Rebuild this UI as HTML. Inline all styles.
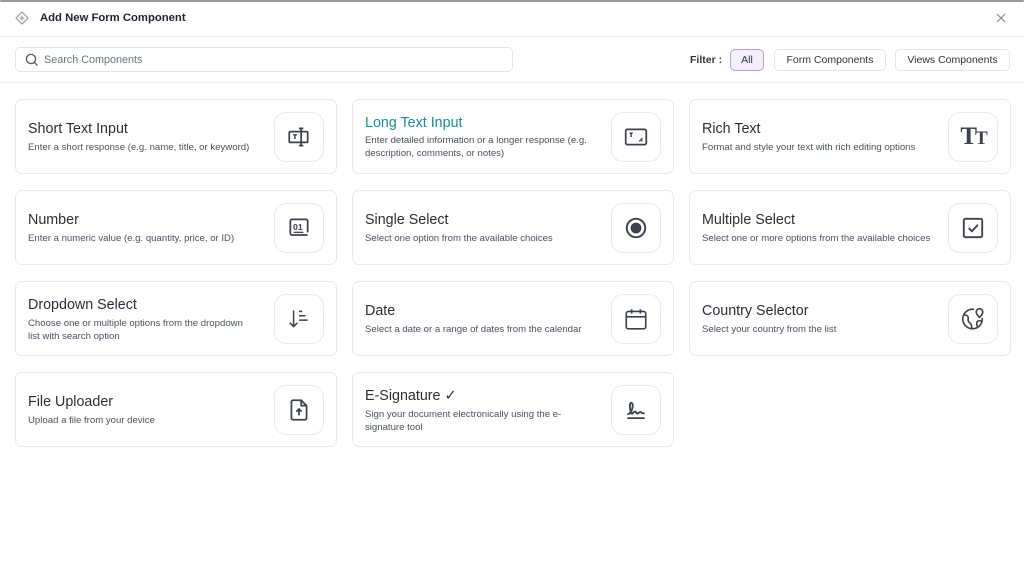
<!DOCTYPE html>
<html><head><meta charset="utf-8"><style>
*{box-sizing:border-box;margin:0;padding:0}
body{width:1024px;height:569px;background:#fff;font-family:"Liberation Sans",sans-serif;position:relative;overflow:hidden;color:#2f3340}
.top{position:absolute;left:0;top:0;width:1024px;height:2px;background:#9a9a9a;border-radius:3px}
.hdr{position:absolute;top:0;left:0;width:1024px;height:37px;border-bottom:1px solid #eeeff2}
.hdr .t{position:absolute;left:40px;top:12px;font-size:11.3px;font-weight:bold;color:#1f2230}
.hdr svg.p{position:absolute;left:15px;top:11px}
.hdr .x{position:absolute;left:995px;top:12px}
.bar{position:absolute;top:37px;left:0;width:1024px;height:46px;border-bottom:1px solid #eeeff2}
.search{position:absolute;left:15px;top:10px;width:498px;height:25px;border:1px solid #e3e5ea;border-radius:5px}
.search span{position:absolute;left:28px;top:6px;font-size:10.8px;color:#6b7280}
.search svg{position:absolute;left:9px;top:5px}
.flt{position:absolute;left:690px;top:17px;font-size:10.5px;font-weight:bold;color:#333}
.btn{position:absolute;top:12px;height:22px;border:1px solid #e3e5ea;border-radius:5px;font-size:10.5px;color:#333;text-align:center;line-height:20px}
.btn.a{border-color:#b89be6;background:#f4efff}
.card{position:absolute;width:322px;height:75px;border:1px solid #e8e9ed;border-radius:7px}
.card h3{position:absolute;left:12px;font-size:14.3px;font-weight:normal;color:#2b2e3a}
.card p{position:absolute;left:12px;width:240px;font-size:9.6px;line-height:12.5px;color:#4b5060}
.ib{position:absolute;left:258px;top:12px;width:50px;height:50px;border:1px solid #e8e9ed;border-radius:12px;display:flex;align-items:center;justify-content:center}
</style></head><body>
<div class="top"></div>
<div class="hdr">
<svg class="p" width="14" height="14" viewBox="0 0 14 14" fill="none" stroke="#8a8f9a" stroke-width="1"><path d="M7 1L13 7L7 13L1 7Z"/><path d="M7 4.5V9.5M4.5 7H9.5"/></svg>
<div class="t">Add New Form Component</div>
<svg class="x" width="12" height="12" viewBox="0 0 12 12" stroke="#888" stroke-width="1.2"><path d="M2 2L10 10M10 2L2 10"/></svg>
</div>
<div class="bar">
<div class="search"><svg width="14" height="14" viewBox="0 0 14 14" fill="none" stroke="#555b66" stroke-width="1.3"><circle cx="6" cy="6" r="4.6"/><path d="M9.4 9.4L12.6 12.6"/></svg><span>Search Components</span></div>
<div class="flt">Filter :</div>
<div class="btn a" style="left:730px;width:34px">All</div>
<div class="btn" style="left:774px;width:112px">Form Components</div>
<div class="btn" style="left:895px;width:115px">Views Components</div>
</div>

<div class="card" style="left:15px;top:99px"><h3 style="top:21px">Short Text Input</h3><p style="top:42px">Enter a short response (e.g. name, title, or keyword)</p>
<div class="ib"><svg width="26" height="26" viewBox="0 0 24 24" fill="none" stroke="#3d414d" stroke-width="1.6"><rect x="3" y="7" width="17" height="10" rx="1"/><path d="M14 4V20M12 4H16M12 20H16"/><path d="M6.5 10H10M8.2 10V14" stroke-width="1.3"/></svg></div></div>

<div class="card" style="left:352px;top:99px"><h3 style="top:15px;color:#1a8a9a">Long Text Input</h3><p style="top:35px">Enter detailed information or a longer response (e.g. description, comments, or notes)</p>
<div class="ib"><svg width="26" height="26" viewBox="0 0 24 24" fill="none" stroke="#3d414d" stroke-width="1.6"><rect x="2.5" y="5" width="19" height="14" rx="1.5"/><path d="M6 8.5H9M7.5 8.5V12" stroke-width="1.3"/><path d="M15 16L18 13M17 16L18 15" stroke-width="1.2"/></svg></div></div>

<div class="card" style="left:689px;top:99px"><h3 style="top:21px">Rich Text</h3><p style="top:42px">Format and style your text with rich editing options</p>
<div class="ib"><span style="font-family:'Liberation Serif',serif;font-weight:bold;font-size:25px;color:#3d414d;letter-spacing:-2px">T<span style="font-size:19px">T</span></span></div></div>

<div class="card" style="left:15px;top:190px"><h3 style="top:21px">Number</h3><p style="top:42px">Enter a numeric value (e.g. quantity, price, or ID)</p>
<div class="ib"><svg width="26" height="26" viewBox="0 0 24 24" fill="none" stroke="#3d414d" stroke-width="1.6"><path d="M20 16V5.5A1.5 1.5 0 0 0 18.5 4H5.5A1.5 1.5 0 0 0 4 5.5V17A1.5 1.5 0 0 0 5.5 18.5H20"/><text x="6.5" y="14" font-size="8" font-weight="bold" fill="#3d414d" stroke="none" font-family="Liberation Sans">01</text><path d="M7 16H16" stroke-width="1.2"/></svg></div></div>

<div class="card" style="left:352px;top:190px"><h3 style="top:21px">Single Select</h3><p style="top:42px">Select one option from the available choices</p>
<div class="ib"><svg width="26" height="26" viewBox="0 0 24 24"><circle cx="12" cy="12" r="8.5" fill="none" stroke="#3d414d" stroke-width="1.8"/><circle cx="12" cy="12" r="5" fill="#3d414d"/></svg></div></div>

<div class="card" style="left:689px;top:190px"><h3 style="top:21px">Multiple Select</h3><p style="top:42px">Select one or more options from the available choices</p>
<div class="ib"><svg width="26" height="26" viewBox="0 0 24 24" fill="none" stroke="#3d414d" stroke-width="1.7"><rect x="3.5" y="3.5" width="17" height="17" rx="1.5"/><path d="M8 12L11 15L16.5 9"/></svg></div></div>

<div class="card" style="left:15px;top:281px"><h3 style="top:15px">Dropdown Select</h3><p style="top:36px;width:225px">Choose one or multiple options from the dropdown list with search option</p>
<div class="ib"><svg width="26" height="26" viewBox="0 0 24 24" fill="none" stroke="#3d414d" stroke-width="1.4"><path d="M7 4V19M3.5 15.5L7 19L10.5 15.5"/><path d="M12 5H15M12 9H18M12 13H20"/></svg></div></div>

<div class="card" style="left:352px;top:281px"><h3 style="top:21px">Date</h3><p style="top:42px">Select a date or a range of dates from the calendar</p>
<div class="ib"><svg width="26" height="26" viewBox="0 0 24 24" fill="none" stroke="#3d414d" stroke-width="1.5"><rect x="3" y="5" width="18" height="16" rx="2"/><path d="M3 10H21M8 3V7M16 3V7"/></svg></div></div>

<div class="card" style="left:689px;top:281px"><h3 style="top:21px">Country Selector</h3><p style="top:42px">Select your country from the list</p>
<div class="ib"><svg width="26" height="26" viewBox="0 0 24 24" fill="none" stroke="#3d414d" stroke-width="1.5"><path d="M20.5 11A9 9 0 1 1 13 3.1"/><path d="M4 8.5C7 8 8 10 7.5 12.5C7 15 9.5 15 10.5 17.5L11 20.8M20 14C17 13 15 14 15.5 17L16 19"/><path d="M18 10.5C18 10.5 15 7.5 15 5.5A3 3 0 0 1 21 5.5C21 7.5 18 10.5 18 10.5Z"/></svg></div></div>

<div class="card" style="left:15px;top:372px"><h3 style="top:21px">File Uploader</h3><p style="top:42px">Upload a file from your device</p>
<div class="ib"><svg width="26" height="26" viewBox="0 0 24 24" fill="none" stroke="#3d414d" stroke-width="1.6"><path d="M14 3H6.5A1.5 1.5 0 0 0 5 4.5V19.5A1.5 1.5 0 0 0 6.5 21H17.5A1.5 1.5 0 0 0 19 19.5V8Z"/><path d="M14 3V8H19"/><path d="M12 17V11M9.5 13.5L12 11L14.5 13.5"/></svg></div></div>

<div class="card" style="left:352px;top:372px"><h3 style="top:15px">E-Signature ✓</h3><p style="top:36px;width:212px">Sign your document electronically using the e-signature tool</p>
<div class="ib"><svg width="26" height="26" viewBox="0 0 24 24" fill="none" stroke="#3d414d" stroke-width="1.7"><path d="M4 16C6 16 9 12 9 8C9 5 7 4.5 6.5 7C6 10 7 14 8 16M8 16C9 15 10 13 11.5 13.5C12.5 14 12 16 14 15C15.5 14 16 13 17 14.5C18 15.5 19 15 20 15"/><path d="M4 19.5H20"/></svg></div></div>
</body></html>
